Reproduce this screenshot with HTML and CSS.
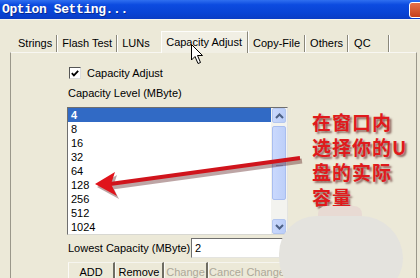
FILE: index.html
```html
<!DOCTYPE html>
<html>
<head>
<meta charset="utf-8">
<link rel="stylesheet" href="styles.css">
</head>
<body>
<div class="window">
  <div class="titlebar">
    <span class="title">Option Setting...</span>
    <span class="close"></span>
  </div>
  <div class="tabs">
    <div class="tab">Strings</div>
    <div class="tab">Flash Test</div>
    <div class="tab tab-luns">LUNs</div>
    <div class="tab active">Capacity Adjust</div>
    <div class="tab">Copy-File</div>
    <div class="tab">Others</div>
    <div class="tab tab-qc">QC</div>
  </div>
  <div class="panel">
    <div class="check">
      <span class="box"><svg width="11" height="11" viewBox="0 0 11 11"><path d="M2 5 L4.3 7.5 L9 2.5" fill="none" stroke="#000" stroke-width="2"/></svg></span>
      <span>Capacity Adjust</span>
    </div>
    <div class="label">Capacity Level (MByte)</div>
    <div class="listbox">
      <ul class="items">
        <li class="sel">4</li>
        <li>8</li>
        <li>16</li>
        <li>32</li>
        <li>64</li>
        <li>128</li>
        <li>256</li>
        <li>512</li>
        <li>1024</li>
      </ul>
      <div class="scroll">
        <div class="sbtn"><svg width="9" height="6" viewBox="0 0 9 6"><path d="M1 5 L4.5 1.5 L8 5" fill="none" stroke="#4d6185" stroke-width="2"/></svg></div>
        <div class="track">
          <div class="thumb"><span class="grip"></span></div>
        </div>
        <div class="sbtn"><svg width="9" height="6" viewBox="0 0 9 6"><path d="M1 1 L4.5 4.5 L8 1" fill="none" stroke="#4d6185" stroke-width="2"/></svg></div>
      </div>
    </div>
    <div class="lowest">
      <span>Lowest Capacity (MByte)</span>
      <div class="input">2</div>
    </div>
    <div class="buttons">
      <div class="btn">ADD</div>
      <div class="btn">Remove</div>
      <div class="btn dis">Change</div>
      <div class="btn dis">Cancel Change</div>
    </div>
  </div>

  <svg class="arrow" width="420" height="278" viewBox="0 0 420 278">
    <g opacity="0.35" transform="translate(2,3)">
      <line x1="110" y1="184" x2="300" y2="158" stroke="#400" stroke-width="5"/>
      <polygon points="95,184 115,172 111,184 117,196" fill="#400"/>
    </g>
    <line x1="110" y1="184" x2="300" y2="158" stroke="#d0141c" stroke-width="4"/>
    <polygon points="95,184 115,172 111,184 117,196" fill="#e0141c"/>
  </svg>

  <div class="note">在窗口内<br>选择你的U<br>盘的实际<br>容量</div>

  <div class="blob-top"></div>
  <div class="blob"></div>

  <svg class="cursor" width="13" height="21" viewBox="0 0 13 21">
    <path d="M0.5 0.5 L0.5 16 L4 12.5 L7 19.5 L9.5 18.5 L6.5 11.5 L11.5 11.5 Z" fill="#fff" stroke="#000" stroke-width="1"/>
  </svg>
</div>
</body>
</html>
```

FILE: styles.css
```css
* { box-sizing: border-box; margin: 0; padding: 0; }
html, body { width: 420px; height: 278px; overflow: hidden; }
body {
  background: #ece9d8;
  font-family: "Liberation Sans", Arial, sans-serif;
  font-size: 11px;
  color: #000;
}
.window { position: relative; width: 420px; height: 278px; overflow: hidden; }

.titlebar {
  background: linear-gradient(#2f6ff0 0%, #0c4be0 25%, #0843d4 70%, #0a3cc4 100%);
  display: flex;
  align-items: center;
  justify-content: space-between;
  border-bottom: 1px solid #f7f6ef;
  height: 20px;
}
.title {
  font-family: "Liberation Mono", "DejaVu Sans Mono", monospace;
  font-weight: bold;
  font-size: 13px;
  letter-spacing: -0.4px;
  color: #fff;
  padding-left: 2px;
  text-shadow: 1px 1px 0 #0a2a90;
}
.close {
  width: 16px;
  height: 16px;
  margin-right: -5px;
  background: linear-gradient(#e8724a, #c6401c);
  border: 1px solid #fff;
  border-radius: 3px;
}

.tabs {
  display: flex;
  align-items: flex-end;
  height: 21px;
  margin: 11px 0 0 13px;
}
.tab {
  height: 17px;
  line-height: 17px;
  padding: 0 4px 0 5px;
  border-right: 1px solid #8a877a;
  box-shadow: 1px 0 0 #ffffff;
  white-space: nowrap;
}
.tab-luns { border-right: none; box-shadow: none; width: 44px; }
.tab-qc { min-width: 41px; padding-left: 6px; }
.tab.active {
  height: 22px;
  line-height: 20px;
  padding: 0 5px 0 4px;
  margin-bottom: -1px;
  background: #f1efe4;
  border-top: 1px solid #fdfdfb;
  border-left: 1px solid #fdfdfb;
  border-right: 1px solid #8a877a;
}

.panel {
  margin-left: 10px;
  width: 407px;
  height: 226px;
  border-top: 1px solid #f8f7f2;
  border-left: 1px solid #9a978a;
  border-right: 1px solid #9a978a;
  padding: 14px 0 0 57px;
  display: flex;
  flex-direction: column;
}

.check { display: flex; align-items: center; height: 13px; gap: 6px; }
.box {
  width: 12px;
  height: 12px;
  margin-left: 1px;
  background: #fff;
  border: 1px solid;
  border-color: #555 #ddd #ddd #555;
  display: flex;
  align-items: center;
  justify-content: center;
}
.box svg { display: block; }

.label { margin-top: 8px; height: 13px; line-height: 13px; }

.listbox {
  margin-top: 7px;
  margin-left: -1px;
  width: 221px;
  height: 128px;
  background: #fff;
  border: 1px solid;
  border-color: #6f6f6f #e4e4e0 #d8d8d2 #6f6f6f;
  display: flex;
}
.items { list-style: none; flex: 1; }
.items li { height: 14px; line-height: 14px; padding-left: 3px; }
.items li.sel { background: #316ac5; color: #fff; font-weight: bold; }

.scroll {
  width: 16px;
  display: flex;
  flex-direction: column;
  background: #f3f3ef;
  padding: 0 1px;
}
.sbtn {
  height: 15px;
  background: linear-gradient(90deg, #c9d8fc, #bacdf8);
  border: 1px solid #b3c6ef;
  border-radius: 2px;
  display: flex;
  align-items: center;
  justify-content: center;
}
.track { flex: 1; padding: 3px 0 19px; }
.thumb {
  height: 100%;
  background: linear-gradient(90deg, #cad9fd, #bdcff9);
  border: 1px solid #a9bef0;
  border-radius: 2px;
  display: flex;
  align-items: center;
  justify-content: center;
}
.grip {
  width: 7px;
  height: 6px;
  border-top: 1px solid #eef3fe;
  border-bottom: 1px solid #8fa7dc;
  box-shadow: inset 0 2px 0 -1px #8fa7dc;
}

.lowest { display: flex; align-items: center; margin-top: 3px; height: 20px; }
.lowest span { width: 123px; }
.input {
  width: 96px;
  height: 20px;
  background: #fff;
  border: 1px solid;
  border-color: #6f6f6f #e4e4e0 #e4e4e0 #6f6f6f;
  padding-left: 3px;
  line-height: 18px;
}

.buttons {
  display: grid;
  grid-template-columns: 47px 49px 44px 79px;
  margin-top: 4px;
  height: 17px;
}
.btn {
  text-align: center;
  height: 17px;
  line-height: 18px;
  border-top: 1px solid #f6f5ef;
  border-right: 2px solid #6e6c62;
  border-left: 1px solid #fbfaf6;
  white-space: nowrap;
}
.btn.dis { color: #aca899; }

.arrow { position: absolute; left: 0; top: 0; }

.note {
  position: absolute;
  left: 312px;
  top: 109px;
  font-family: "Noto Sans CJK SC", "Liberation Sans", sans-serif;
  font-weight: bold;
  font-size: 19px;
  line-height: 25px;
  letter-spacing: 1px;
  color: #e01a1c;
  text-shadow: 2px 2px 2px rgba(70, 0, 0, 0.55);
}

.blob-top {
  position: absolute;
  left: 318px;
  top: 206px;
  width: 44px;
  height: 18px;
  background: #e8dad3;
  border-radius: 8px;
}
.blob {
  position: absolute;
  left: 279px;
  top: 216px;
  width: 124px;
  height: 80px;
  background: #e4e3de;
  border-radius: 40px 45px 40px 40px;
}

.cursor { position: absolute; left: 191px; top: 44px; }
```
